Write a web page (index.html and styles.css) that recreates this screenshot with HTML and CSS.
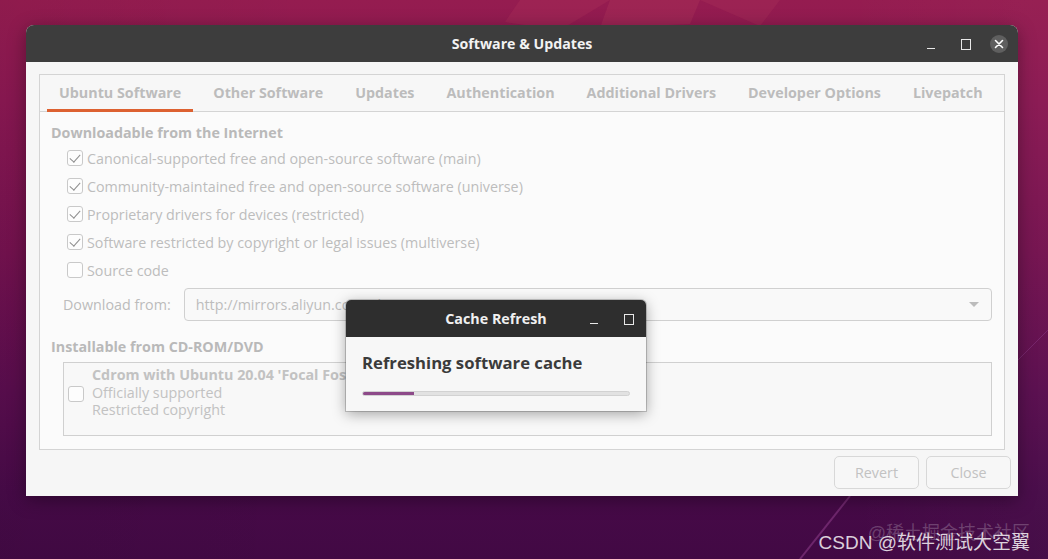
FILE: index.html
```html
<!DOCTYPE html>
<html lang="en">
<head>
<meta charset="utf-8">
<title>Software &amp; Updates</title>
<link rel="stylesheet" href="styles.css">
</head>
<body>
<div class="desktop">
  <svg class="wallpaper" width="1048" height="559" viewBox="0 0 1048 559">
    <polygon points="520,0 610,0 560,30 505,22" fill="#ad3058" opacity="0.35"/>
    <polygon points="610,0 700,0 690,24 600,28" fill="#b23a5e" opacity="0.3"/>
    <polygon points="700,0 780,0 760,26" fill="#a8305a" opacity="0.35"/>
    <line x1="850" y1="496" x2="800" y2="559" stroke="#8a3a86" stroke-width="2" opacity="0.6"/>
    <line x1="1018" y1="360" x2="1048" y2="330" stroke="#8a3a86" stroke-width="1" opacity="0.5"/>
  </svg>

  <div class="window">
    <div class="titlebar">
      <span class="title">Software &amp; Updates</span>
      <div class="controls">
        <span class="ctl ctl-min"></span>
        <span class="ctl ctl-max"></span>
        <span class="ctl ctl-close">
          <svg width="18" height="18" viewBox="0 0 18 18"><path d="M5.5 5.5 L12.5 12.5 M12.5 5.5 L5.5 12.5" stroke="#fff" stroke-width="1.6" stroke-linecap="round"/></svg>
        </span>
      </div>
    </div>
    <div class="win-body">
      <div class="notebook">
        <div class="tabs">
          <span class="tab active">Ubuntu Software</span>
          <span class="tab">Other Software</span>
          <span class="tab">Updates</span>
          <span class="tab">Authentication</span>
          <span class="tab">Additional Drivers</span>
          <span class="tab">Developer Options</span>
          <span class="tab">Livepatch</span>
        </div>
        <div class="page">
          <div class="heading">Downloadable from the Internet</div>
          <div class="checks">
            <div class="row"><span class="cb checked"></span><span>Canonical-supported free and open-source software (main)</span></div>
            <div class="row"><span class="cb checked"></span><span>Community-maintained free and open-source software (universe)</span></div>
            <div class="row"><span class="cb checked"></span><span>Proprietary drivers for devices (restricted)</span></div>
            <div class="row"><span class="cb checked"></span><span>Software restricted by copyright or legal issues (multiverse)</span></div>
            <div class="row"><span class="cb"></span><span>Source code</span></div>
          </div>
          <div class="download">
            <span class="dl-label">Download from:</span>
            <div class="combo">
              <span>http://mirrors.aliyun.com/ubuntu</span>
              <span class="arrow"></span>
            </div>
          </div>
          <div class="heading heading-cd">Installable from CD-ROM/DVD</div>
          <div class="cdbox">
            <span class="cb"></span>
            <div class="cdtext">
              <div class="cd-title">Cdrom with Ubuntu 20.04 'Focal Fossa'</div>
              <div>Officially supported</div>
              <div>Restricted copyright</div>
            </div>
          </div>
        </div>
      </div>
      <div class="actions">
        <button class="btn">Revert</button>
        <button class="btn">Close</button>
      </div>
    </div>
  </div>

  <div class="dialog">
    <div class="dlg-titlebar">
      <span class="dlg-title">Cache Refresh</span>
      <div class="dlg-controls">
        <span class="ctl ctl-min small"></span>
        <span class="ctl ctl-max small"></span>
      </div>
    </div>
    <div class="dlg-body">
      <div class="dlg-text">Refreshing software cache</div>
      <div class="progress"><div class="progress-fill" style="width:19%"></div></div>
    </div>
  </div>

  <div class="wm wm-back">@稀土掘金技术社区</div>
  <div class="wm wm-front">CSDN @软件测试大空翼</div>
</div>
</body>
</html>
```

FILE: styles.css
```css
* { box-sizing: border-box; }
html, body { margin: 0; padding: 0; }
body {
  width: 1048px;
  height: 559px;
  overflow: hidden;
  font-family: "Open Sans", "Noto Sans", sans-serif;
}
.desktop {
  position: relative;
  width: 1048px;
  height: 559px;
  background:
    linear-gradient(to right, rgba(0,0,0,0.04), rgba(0,0,0,0) 30%, rgba(0,0,0,0) 80%, rgba(255,255,255,0.02)),
    linear-gradient(to bottom, #951c50 0%, #8a1852 18%, #74124f 45%, #590d4e 70%, #470a48 88%, #420944 100%);
}
.wallpaper { position: absolute; left: 0; top: 0; }

/* main window */
.window {
  position: absolute;
  left: 26px;
  top: 25px;
  width: 992px;
  height: 471px;
  display: flex;
  flex-direction: column;
  border-radius: 8px 8px 0 0;
  overflow: hidden;
  background: #f6f6f6;
  box-shadow: 0 4px 18px rgba(0,0,0,0.35);
}
.titlebar {
  height: 37px;
  flex: none;
  background: #3d3d3d;
  display: flex;
  align-items: center;
  justify-content: center;
  position: relative;
}
.title {
  color: #f2f2f2;
  font-weight: 700;
  font-size: 14.2px;
}
.controls {
  position: absolute;
  right: 10px;
  top: 0;
  height: 37px;
  display: flex;
  align-items: center;
  gap: 16px;
}
.ctl { display: block; position: relative; }
.ctl-min { width: 18px; height: 18px; }
.ctl-min::after {
  content: "";
  position: absolute;
  left: 5px; right: 5px; bottom: 4px;
  height: 1px;
  background: #e8e8e8;
}
.ctl-max { width: 18px; height: 18px; }
.ctl-max::after {
  content: "";
  position: absolute;
  left: 5px; top: 4px;
  width: 8px; height: 9px;
  border: 1px solid #e8e8e8;
}
.ctl-close {
  width: 18px; height: 18px;
  border-radius: 50%;
  background: #5f5f5f;
}
.ctl-close svg { display: block; }

.win-body {
  flex: 1;
  display: flex;
  flex-direction: column;
  padding: 12px 7px 7px 13px;
}
.notebook {
  flex: 1;
  margin-right: 6px;
  border: 1px solid #d4d4d4;
  background: #fbfbfb;
  display: flex;
  flex-direction: column;
}
.tabs {
  height: 37px;
  flex: none;
  display: flex;
  align-items: stretch;
  padding-left: 7px;
  border-bottom: 1px solid #d4d4d4;
  background: #f7f7f7;
}
.tab {
  display: flex;
  align-items: center;
  padding: 0 12px 1px;
  margin-right: 8px;
  font-size: 14.3px;
  font-weight: 700;
  color: #bcbcbc;
  position: relative;
  white-space: nowrap;
}
.tab.active::after {
  content: "";
  position: absolute;
  left: 0; right: 0; bottom: -1px;
  height: 3px;
  background: #dd6131;
}
.page {
  padding: 12px 12px 0 11px;
  display: flex;
  flex-direction: column;
}
.heading {
  font-size: 14.3px;
  font-weight: 700;
  color: #b9b9b9;
  line-height: 18px;
}
.checks {
  padding-left: 16px;
  margin-top: 2px;
}
.row {
  height: 28px;
  display: flex;
  align-items: center;
  gap: 4px;
  font-size: 14.3px;
  color: #bdbdbd;
  white-space: nowrap;
}
.cb {
  width: 16px;
  height: 16px;
  flex: none;
  border: 1px solid #c9c9c9;
  border-radius: 3px;
  background: #fdfdfd;
  position: relative;
}
.cb.checked::after {
  content: "";
  position: absolute;
  left: 4px; top: 1px;
  width: 5px; height: 9px;
  border-right: 1.5px solid #8e8e8e;
  border-bottom: 1.5px solid #8e8e8e;
  transform: rotate(42deg);
}
.download {
  display: flex;
  align-items: center;
  margin-top: 4px;
  padding-left: 12px;
  gap: 13px;
}
.dl-label {
  font-size: 14.3px;
  color: #bcbcbc;
  white-space: nowrap;
}
.combo {
  flex: 1;
  height: 33px;
  border: 1px solid #d0d0d0;
  border-radius: 4px;
  background: #f9f9f9;
  display: flex;
  align-items: center;
  justify-content: space-between;
  padding: 0 12px 0 11px;
  font-size: 14.3px;
  color: #bdbdbd;
}
.arrow {
  width: 0; height: 0;
  border-left: 5px solid transparent;
  border-right: 5px solid transparent;
  border-top: 5px solid #bcbcbc;
}
.heading-cd { margin-top: 17px; }
.cdbox {
  margin: 6px 0 0 12px;
  height: 74px;
  border: 1px solid #d0d0d0;
  background: #f8f8f8;
  display: flex;
  align-items: flex-start;
  padding: 3px 8px 0 4px;
  gap: 8px;
}
.cdbox .cb { margin-top: 20px; }
.cdtext {
  font-size: 14.3px;
  line-height: 17.5px;
  color: #c2c2c2;
}
.cd-title { font-weight: 700; white-space: nowrap; }

.actions {
  flex: none;
  display: flex;
  justify-content: flex-end;
  gap: 7px;
  margin-top: 6px;
}
.btn {
  width: 85px;
  height: 33px;
  border: 1px solid #d8d8d8;
  border-radius: 5px;
  background: #f7f7f7;
  font-family: inherit;
  font-size: 14.3px;
  color: #c2c2c2;
}

/* dialog */
.dialog {
  position: absolute;
  left: 346px;
  top: 300px;
  width: 300px;
  height: 111px;
  border-radius: 5px 5px 0 0;
  overflow: hidden;
  background: #f7f7f7;
  box-shadow: 0 3px 14px rgba(0,0,0,0.35), 0 0 0 1px rgba(0,0,0,0.18);
  display: flex;
  flex-direction: column;
}
.dlg-titlebar {
  height: 37px;
  flex: none;
  background: #2e2e2e;
  display: flex;
  align-items: center;
  justify-content: center;
  position: relative;
}
.dlg-title {
  color: #f0f0f0;
  font-weight: 700;
  font-size: 14.3px;
}
.dlg-controls {
  position: absolute;
  right: 9px;
  top: 0;
  height: 37px;
  display: flex;
  align-items: center;
  gap: 16px;
}
.dlg-body {
  padding: 14px 16px 0;
}
.dlg-text {
  font-size: 16.7px;
  font-weight: 700;
  color: #3b3b3b;
  line-height: 24px;
}
.progress {
  margin-top: 16px;
  height: 5px;
  border-radius: 3px;
  background: #e2e2e2;
  border: 1px solid #d2d2d2;
  overflow: hidden;
}
.progress-fill {
  height: 100%;
  background: #8d4a89;
}

/* watermark */
.wm {
  position: absolute;
  white-space: nowrap;
  font-family: "Liberation Sans", "Noto Sans CJK SC", sans-serif;
}
.wm-back {
  right: 18px;
  top: 518px;
  font-size: 18px;
  color: rgba(255,255,255,0.22);
}
.wm-front {
  right: 18px;
  top: 527px;
  font-size: 19px;
  color: rgba(255,255,255,0.82);
}
```
